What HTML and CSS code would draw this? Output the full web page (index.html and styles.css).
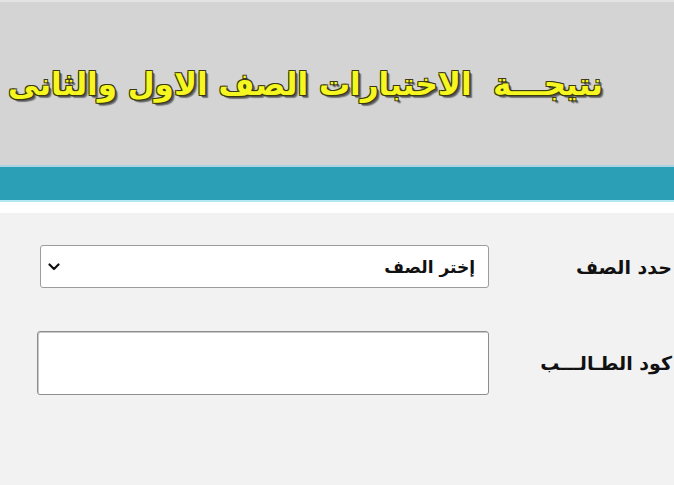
FILE: index.html
```html
<!DOCTYPE html>
<html lang="ar" dir="rtl">
<head>
<meta charset="utf-8">
<title>نتيجة الاختبارات</title>
<link rel="stylesheet" href="styles.css">
</head>
<body>
<header class="top">
  <h1 class="title">نتيجـــة&nbsp; الاختبارات الصف الاول والثانى الثانوى</h1>
</header>
<div class="band"></div>
<div class="gap"></div>
<main class="form">
  <div class="row">
    <label class="lbl" for="grade">حدد الصف</label>
    <div class="select-wrap">
      <select id="grade" class="sel">
        <option>إختر الصف</option>
      </select>
      <svg class="chev" width="12" height="8" viewBox="0 0 12 8"><path d="M1.5 1.5 L6 6 L10.5 1.5" fill="none" stroke="#111" stroke-width="2.2" stroke-linecap="round" stroke-linejoin="round"/></svg>
    </div>
  </div>
  <div class="row">
    <label class="lbl" for="code">كود الطـالـــب</label>
    <input id="code" class="inp" type="text">
  </div>
</main>
</body>
</html>
```
FILE: styles.css
```css
html, body {
  margin: 0;
  padding: 0;
}
body {
  background: #f2f2f2;
  overflow: hidden;
  width: 674px;
  height: 485px;
  font-family: "DejaVu Sans", "Liberation Sans", sans-serif;
}
.top {
  height: 163px;
  background: #d4d4d4;
  border-top: 2px solid #e3e3e3;
  border-bottom: 2px solid #a9d3e3;
  display: flex;
  align-items: center;
  padding-right: 71px;
  overflow: hidden;
}
.title {
  margin: 0;
  white-space: nowrap;
  font-size: 31px;
  font-weight: bold;
  color: #f6f620;
  text-shadow: -1px -1px 0 #3a3a10, 1px -1px 0 #3a3a10, -1px 1px 0 #3a3a10, 1px 1px 0 #3a3a10, 2px 2px 0 #555, 3px 3px 1px #777;
}
.band {
  height: 33px;
  background: #2a9fb5;
  border-bottom: 2px solid #b3e9f1;
}
.gap {
  height: 11px;
  background: #ffffff;
}
.form {
  padding-top: 32px;
  display: flex;
  flex-direction: column;
  gap: 43px;
}
.row {
  display: flex;
  align-items: center;
}
.lbl {
  width: 185px;
  box-sizing: border-box;
  padding-right: 2px;
  font-size: 19px;
  font-weight: bold;
  color: #111;
  white-space: nowrap;
}
.select-wrap {
  position: relative;
  width: 449px;
  height: 43px;
}
.sel {
  appearance: none;
  -webkit-appearance: none;
  width: 100%;
  height: 100%;
  box-sizing: border-box;
  border: 1px solid #9c9c9c;
  border-radius: 3px;
  background: #ffffff;
  padding: 0 13px 0 30px;
  font-family: "DejaVu Sans", "Liberation Sans", sans-serif;
  font-size: 17px;
  font-weight: bold;
  color: #111;
  direction: rtl;
}
.chev {
  position: absolute;
  left: 8px;
  top: 18px;
  pointer-events: none;
}
.inp {
  width: 452px;
  height: 64px;
  box-sizing: border-box;
  border: 1px solid #8e8e8e;
  border-radius: 3px;
  background: #ffffff;
  box-shadow: inset 1px 1px 0 #c8c8c8;
  margin: 0;
}
```
